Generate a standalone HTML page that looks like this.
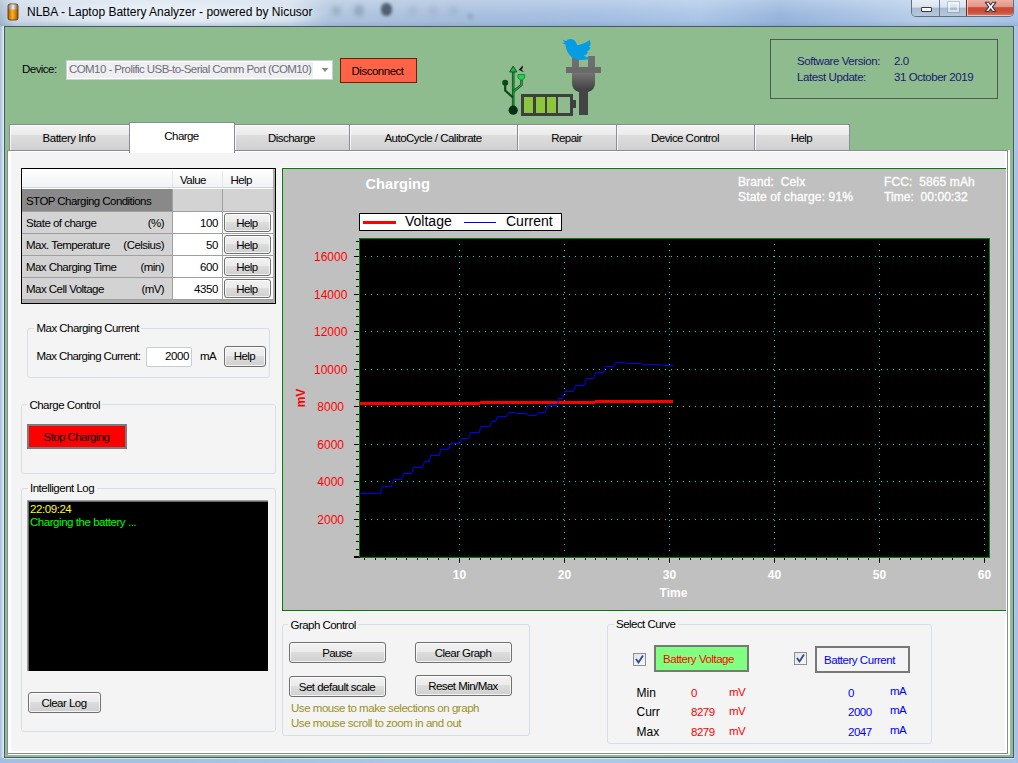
<!DOCTYPE html><html><head><meta charset="utf-8"><style>
html,body{margin:0;padding:0;}
body{width:1018px;height:763px;overflow:hidden;position:relative;font-family:"Liberation Sans", sans-serif;background:#a9c3e3;}
.t{position:absolute;white-space:nowrap;}
.b{position:absolute;}
svg{position:absolute;left:0;top:0;}
</style></head><body>
<div class="b" style="left:0px;top:0px;width:1018px;height:763px;background:linear-gradient(90deg,#a9bbd0 0%,#cfdbe9 1.5%,#d8e3ef 11.8%,#d3dfec 28.5%,#b0c5df 32.4%,#a8bfdd 44.2%,#a5c0e3 58.9%,#adc7e7 68.8%,#98b6dc 76.6%,#a9c3e4 84.5%,#b8cfe9 90.4%,#a8c4e8 100%);"></div>
<div class="b" style="left:0px;top:0px;width:1018px;height:26px;background:linear-gradient(180deg,rgba(255,255,255,0.25),rgba(255,255,255,0) 60%,rgba(80,110,150,0.06) 100%);"></div>
<div class="b" style="left:14px;top:1px;width:317px;height:24px;background:radial-gradient(ellipse 50% 60% at 50% 55%,rgba(236,243,250,0.85) 0%,rgba(236,243,250,0.55) 60%,rgba(236,243,250,0) 100%);"></div>
<div class="b" style="left:0px;top:21px;width:1018px;height:5px;background:linear-gradient(180deg,rgba(90,120,160,0) 0%,rgba(90,120,160,0.18) 100%);"></div>
<div class="b" style="left:332px;top:6px;width:9px;height:9px;background:rgba(80,110,100,0.25);filter:blur(2px);border-radius:50%;"></div>
<div class="b" style="left:354px;top:5px;width:10px;height:11px;background:rgba(60,80,100,0.25);filter:blur(2px);border-radius:40%;"></div>
<div class="b" style="left:381px;top:3px;width:11px;height:13px;background:rgba(40,50,65,0.7);filter:blur(1.6px);border-radius:45%;"></div>
<div class="b" style="left:408px;top:6px;width:9px;height:9px;background:rgba(90,110,140,0.12);filter:blur(2px);border-radius:50%;"></div>
<div class="b" style="left:429px;top:6px;width:9px;height:9px;background:rgba(90,110,140,0.12);filter:blur(2px);border-radius:50%;"></div>
<div class="b" style="left:449px;top:6px;width:9px;height:9px;background:rgba(90,110,140,0.12);filter:blur(2px);border-radius:50%;"></div>
<div class="b" style="left:467px;top:13px;width:7px;height:7px;background:rgba(70,90,120,0.18);filter:blur(1.5px);border-radius:50%;"></div>
<div class="b" style="left:0px;top:26px;width:4px;height:737px;background:linear-gradient(90deg,#a9bcd2,#c6d9ee 60%,#e6f0fa);"></div>
<div class="b" style="left:0px;top:758px;width:1018px;height:5px;background:linear-gradient(90deg,#a3bedf,#abc9ea 50%,#a6c4e8);"></div>
<div class="b" style="left:4px;top:758px;width:1010px;height:1px;background:#d8e6f5;"></div>
<div class="b" style="left:1014px;top:26px;width:4px;height:737px;background:linear-gradient(90deg,#b0c8e6,#a2bfe4);"></div>
<svg width="1018" height="30" style="left:0;top:0"><defs><linearGradient id="bat" x1="0" x2="1" y1="0" y2="0"><stop offset="0" stop-color="#b25a00"/><stop offset="0.45" stop-color="#ffb020"/><stop offset="1" stop-color="#a85000"/></linearGradient><linearGradient id="batt" x1="0" x2="1"><stop offset="0" stop-color="#777"/><stop offset="0.5" stop-color="#eee"/><stop offset="1" stop-color="#666"/></linearGradient></defs><rect x="8" y="4" width="10" height="16" rx="2" fill="url(#bat)" stroke="#4a3000" stroke-width="0.8"/><rect x="8.4" y="4.4" width="9.2" height="5" rx="1.5" fill="url(#batt)"/></svg>
<div class="t" style="left:27px;top:5px;font-size:12px;line-height:14px;color:#000;letter-spacing:0px;">NLBA - Laptop Battery Analyzer - powered by Nicusor</div>
<div class="b" style="left:911px;top:0px;width:103px;height:17px;box-sizing:border-box;border:1px solid #5f6f83;border-top:none;border-radius:0 0 5px 5px;overflow:hidden;"></div>
<div class="b" style="left:912px;top:0px;width:27px;height:16px;background:linear-gradient(#e7eef7 0%,#d9e4f0 45%,#a9bad0 50%,#b8c8dc 100%);border-radius:0 0 0 4px;"></div>
<div class="b" style="left:939px;top:0px;width:1px;height:16px;background:#6a7a8e;"></div>
<div class="b" style="left:940px;top:0px;width:26px;height:16px;background:linear-gradient(#e7eef7 0%,#d9e4f0 45%,#a9bad0 50%,#b8c8dc 100%);"></div>
<div class="b" style="left:966px;top:0px;width:1px;height:16px;background:#7a2a20;"></div>
<div class="b" style="left:967px;top:0px;width:46px;height:16px;background:linear-gradient(#eeb0a2 0%,#e0968a 42%,#cf4a32 48%,#c8503a 75%,#d87a66 100%);border-radius:0 0 4px 0;box-shadow:inset 1px -1px 0 rgba(255,220,210,0.7);"></div>
<div class="b" style="left:921px;top:7px;width:11px;height:5px;box-sizing:border-box;border:1px solid #333b47;background:#fff;border-radius:1px;"></div>
<div class="b" style="left:948px;top:2px;width:11px;height:10px;box-sizing:border-box;border:2px solid rgba(255,255,255,0.55);outline:1px solid rgba(120,135,155,0.4);"></div>
<svg width="1018" height="20" style="left:0;top:0"><path d="M985.3 2.3 L988.7 2.3 L990.6 5 L992.5 2.3 L995.9 2.3 L992.5 6.9 L995.9 11.5 L992.5 11.5 L990.6 8.8 L988.7 11.5 L985.3 11.5 L988.7 6.9 Z" fill="#fff" stroke="#343646" stroke-width="1.1" stroke-linejoin="round"/></svg>
<div class="b" style="left:4px;top:26px;width:1010px;height:732px;background:#4a5868;"></div>
<div class="b" style="left:5px;top:27px;width:1008px;height:730px;background:#8fbc8f;"></div>
<div class="t" style="left:22px;top:63px;font-size:11.5px;line-height:13px;color:#000;letter-spacing:-0.537px;">Device:</div>
<div class="b" style="left:66px;top:60px;width:267px;height:20px;box-sizing:border-box;border:1px solid #c9d0d6;background:#fff;"></div>
<div class="b" style="left:68px;top:62px;width:245px;height:16px;background:#efefef;"></div>
<div class="t" style="left:69px;top:63px;font-size:11.5px;line-height:13px;color:#6d6d80;letter-spacing:-0.572px;">COM10 - Prolific USB-to-Serial Comm Port (COM10)</div>
<svg width="1018" height="100" style="left:0;top:0"><path d="M321.5 68 L328.5 68 L325 72 Z" fill="#8a8a8a"/></svg>
<div class="b" style="left:340px;top:58px;width:77px;height:25px;box-sizing:border-box;border:1px solid #6e1d10;background:#ff6347;"></div>
<div class="t" style="left:351.5px;top:65px;font-size:11.5px;line-height:13px;color:#000;letter-spacing:-0.484px;">Disconnect</div>
<div class="b" style="left:770px;top:39px;width:228px;height:60px;box-sizing:border-box;border:1px solid #505a50;"></div>
<div class="t" style="left:797px;top:55px;font-size:11.5px;line-height:13px;color:#191970;letter-spacing:-0.424px;">Software Version:</div>
<div class="t" style="left:894px;top:55px;font-size:11.5px;line-height:13px;color:#191970;letter-spacing:-0.419px;">2.0</div>
<div class="t" style="left:797px;top:71px;font-size:11.5px;line-height:13px;color:#191970;letter-spacing:-0.422px;">Latest Update:</div>
<div class="t" style="left:894px;top:71px;font-size:11.5px;line-height:13px;color:#191970;letter-spacing:-0.438px;">31 October 2019</div>
<svg width="1018" height="130" style="left:0;top:0">
<defs>
<linearGradient id="plug" x1="0" y1="0" x2="0" y2="1"><stop offset="0" stop-color="#757575"/><stop offset="1" stop-color="#3a3a3a"/></linearGradient>
</defs>
<!-- plug -->
<rect x="572" y="56" width="7" height="12" fill="#6e6e6e"/>
<rect x="588" y="56" width="7" height="12" fill="#6e6e6e"/>
<rect x="566" y="67" width="35" height="6" fill="#6a6a6a"/>
<path d="M572 73 L595 73 L595 83 Q595 90 588 92 L579 92 Q572 90 572 83 Z" fill="url(#plug)"/>
<rect x="579" y="90" width="9" height="25" fill="#444"/>
<!-- twitter bird -->
<path d="M562.6 39.8 L566.3 41.2 C567 39.6 569 38.9 571 39 C574 39.2 576.2 41.5 577.2 45.3 C581 44.8 586 43 589.6 40.1 C590.8 41.5 590.7 44 590.2 45.6 L588.6 46.7 L590.6 47.6 C590 49 589.2 50.3 588.2 51 L586.4 51.4 L588 52.2 C587.3 53.6 586.2 54.7 585 55.2 L583.6 55.4 L586.3 57 C587.8 57.8 589.5 58.2 591 58.3 C588.5 59.6 585 60 581.5 60 C576 60 571 57.5 568.5 53.5 C566.7 50.8 565.6 47.5 565.5 44.6 L562.4 43 L564.6 42.4 Z" fill="#049de4"/>
<!-- battery -->
<rect x="522.5" y="95.5" width="49" height="19" fill="none" stroke="#3f3f3f" stroke-width="3"/>
<rect x="572" y="100" width="4" height="8" fill="#3f3f3f"/>
<rect x="524" y="97" width="9" height="16" fill="#8cc63e"/>
<rect x="536" y="97" width="9" height="16" fill="#8cc63e"/>
<rect x="547" y="97" width="9" height="16" fill="#8cc63e"/>
<rect x="558" y="97" width="11" height="16" fill="#8fbc8f"/>
<rect x="556" y="97" width="2" height="16" fill="#3f3f3f"/>
<rect x="533" y="97" width="3" height="16" fill="#3f3f3f"/>
<rect x="545" y="97" width="2" height="16" fill="#3f3f3f"/>
<!-- usb -->
<path d="M513.2 108 L513.2 71" stroke="#0d4a1a" stroke-width="2.6"/>
<path d="M513.2 108 L513.2 71" stroke="#1c9a3c" stroke-width="1.2"/>
<path d="M509.6 72 L513.2 66 L516.8 72 Z" fill="#22b04a" stroke="#0d4a1a" stroke-width="0.9"/>
<path d="M505.2 84 L505.2 90.5 L513 97.5" stroke="#0d4a1a" stroke-width="2.2" fill="none"/>
<path d="M521.5 79 L521.5 85 L513.4 91.5" stroke="#0d4a1a" stroke-width="2.4" fill="none"/>
<path d="M521.5 79 L521.5 85 L513.4 91.5" stroke="#20a844" stroke-width="1.1" fill="none"/>
<circle cx="505.2" cy="82.8" r="3" fill="#0a4a18"/>
<path d="M518 74.5 L524.6 74.5 L524.6 78 L522.5 80 L520.5 80 L518 78 Z" fill="#1fd048" stroke="#117a2c" stroke-width="0.8"/>
<circle cx="513.2" cy="110.2" r="4.6" fill="#06300f"/>
<path d="M518.5 70 C520 68.5 521 67.5 522.5 65.5 L523 67.5 L521.5 69.5 L524 72 L522 71.5 L520.5 70.5 Z" fill="#111"/>
</svg>
<div class="b" style="left:9px;top:124px;width:121px;height:27px;box-sizing:border-box;border:1px solid #898c95;border-bottom:none;background:linear-gradient(#f3f3f3 0%,#ececec 36%,#dddddd 40%,#cfcfcf 100%);box-shadow:inset 1px 1px 0 rgba(255,255,255,0.8);"></div>
<div class="t" style="left:-131.0px;width:400px;text-align:center;top:132px;font-size:11.5px;line-height:13px;color:#000;letter-spacing:-0.503px;">Battery Info</div>
<div class="b" style="left:234px;top:124px;width:116px;height:27px;box-sizing:border-box;border:1px solid #898c95;border-bottom:none;background:linear-gradient(#f3f3f3 0%,#ececec 36%,#dddddd 40%,#cfcfcf 100%);box-shadow:inset 1px 1px 0 rgba(255,255,255,0.8);"></div>
<div class="t" style="left:91.5px;width:400px;text-align:center;top:132px;font-size:11.5px;line-height:13px;color:#000;letter-spacing:-0.548px;">Discharge</div>
<div class="b" style="left:349px;top:124px;width:169px;height:27px;box-sizing:border-box;border:1px solid #898c95;border-bottom:none;background:linear-gradient(#f3f3f3 0%,#ececec 36%,#dddddd 40%,#cfcfcf 100%);box-shadow:inset 1px 1px 0 rgba(255,255,255,0.8);"></div>
<div class="t" style="left:233.0px;width:400px;text-align:center;top:132px;font-size:11.5px;line-height:13px;color:#000;letter-spacing:-0.519px;">AutoCycle / Calibrate</div>
<div class="b" style="left:517px;top:124px;width:100px;height:27px;box-sizing:border-box;border:1px solid #898c95;border-bottom:none;background:linear-gradient(#f3f3f3 0%,#ececec 36%,#dddddd 40%,#cfcfcf 100%);box-shadow:inset 1px 1px 0 rgba(255,255,255,0.8);"></div>
<div class="t" style="left:366.5px;width:400px;text-align:center;top:132px;font-size:11.5px;line-height:13px;color:#000;letter-spacing:-0.545px;">Repair</div>
<div class="b" style="left:616px;top:124px;width:139px;height:27px;box-sizing:border-box;border:1px solid #898c95;border-bottom:none;background:linear-gradient(#f3f3f3 0%,#ececec 36%,#dddddd 40%,#cfcfcf 100%);box-shadow:inset 1px 1px 0 rgba(255,255,255,0.8);"></div>
<div class="t" style="left:485.0px;width:400px;text-align:center;top:132px;font-size:11.5px;line-height:13px;color:#000;letter-spacing:-0.532px;">Device Control</div>
<div class="b" style="left:754px;top:124px;width:96px;height:27px;box-sizing:border-box;border:1px solid #898c95;border-bottom:none;background:linear-gradient(#f3f3f3 0%,#ececec 36%,#dddddd 40%,#cfcfcf 100%);box-shadow:inset 1px 1px 0 rgba(255,255,255,0.8);"></div>
<div class="t" style="left:601.5px;width:400px;text-align:center;top:132px;font-size:11.5px;line-height:13px;color:#000;letter-spacing:-0.558px;">Help</div>
<div class="b" style="left:7px;top:150px;width:1001px;height:604px;box-sizing:border-box;border:1px solid #898c95;background:#fff;"></div>
<div class="b" style="left:1008px;top:150px;width:2px;height:605px;background:#fff;"></div>
<div class="b" style="left:8px;top:754px;width:1002px;height:1px;background:#fff;"></div>
<div class="b" style="left:11px;top:152px;width:994px;height:599px;background:#f4f4f4;"></div>
<div class="b" style="left:129px;top:122px;width:106px;height:31px;box-sizing:border-box;border:1px solid #898c95;border-bottom:none;background:#fff;"></div>
<div class="t" style="left:-18.5px;width:400px;text-align:center;top:130px;font-size:11.5px;line-height:13px;color:#000;letter-spacing:-0.568px;">Charge</div>
<div class="b" style="left:21px;top:168px;width:255px;height:136px;background:#000;"></div>
<div class="b" style="left:22px;top:169px;width:253px;height:134px;background:#ababab;"></div>
<div class="b" style="left:22px;top:169px;width:251px;height:20px;background:#fff;"></div>
<div class="b" style="left:23px;top:171px;width:250px;height:17px;background:linear-gradient(#ffffff 0%,#f7f8fa 40%,#eff1f4 100%);"></div>
<div class="b" style="left:22px;top:187px;width:251px;height:1px;background:#d5d5d5;"></div>
<div class="b" style="left:172px;top:171px;width:1px;height:16px;background:#e4e6ea;"></div>
<div class="b" style="left:222px;top:171px;width:1px;height:16px;background:#e4e6ea;"></div>
<div class="t" style="left:180px;top:174px;font-size:11.5px;line-height:13px;color:#000;letter-spacing:-0.541px;">Value</div>
<div class="t" style="left:230.5px;top:174px;font-size:11.5px;line-height:13px;color:#000;letter-spacing:-0.558px;">Help</div>
<div class="b" style="left:22px;top:189px;width:251px;height:23px;background:#a0a0a0;"></div>
<div class="b" style="left:22px;top:189px;width:150px;height:22px;background:#898989;"></div>
<div class="b" style="left:173px;top:189px;width:49px;height:22px;background:#d3d3d3;"></div>
<div class="b" style="left:223px;top:189px;width:50px;height:22px;background:#d3d3d3;"></div>
<div class="t" style="left:26px;top:195px;font-size:11.5px;line-height:13px;color:#000;letter-spacing:-0.547px;">STOP Charging Conditions</div>
<div class="b" style="left:22px;top:212px;width:251px;height:22px;background:#a0a0a0;"></div>
<div class="b" style="left:22px;top:212px;width:150px;height:21px;background:#d3d3d3;"></div>
<div class="b" style="left:173px;top:212px;width:49px;height:21px;background:#fff;"></div>
<div class="b" style="left:223px;top:212px;width:50px;height:21px;background:#fff;"></div>
<div class="t" style="left:26px;top:217px;font-size:11.5px;line-height:13px;color:#000;letter-spacing:-0.516px;">State of charge</div>
<div class="t" style="right:854px;top:217px;font-size:11.5px;line-height:13px;color:#000;letter-spacing:-0.56px;">(%)</div>
<div class="t" style="right:800px;top:217px;font-size:11.5px;line-height:13px;color:#000;letter-spacing:-0.366px;">100</div>
<div class="b" style="left:224px;top:213px;width:47px;height:19px;box-sizing:border-box;border:1px solid #707070;border-radius:3px;background:linear-gradient(#f2f2f2 0%,#ebebeb 45%,#dddddd 50%,#cfcfcf 100%);box-shadow:inset 0 0 0 1px rgba(255,255,255,0.75);"></div>
<div class="t" style="left:47.0px;width:400px;text-align:center;top:217px;font-size:11.5px;line-height:13px;color:#000;letter-spacing:-0.558px;">Help</div>
<div class="b" style="left:22px;top:234px;width:251px;height:22px;background:#a0a0a0;"></div>
<div class="b" style="left:22px;top:234px;width:150px;height:21px;background:#d3d3d3;"></div>
<div class="b" style="left:173px;top:234px;width:49px;height:21px;background:#fff;"></div>
<div class="b" style="left:223px;top:234px;width:50px;height:21px;background:#fff;"></div>
<div class="t" style="left:26px;top:239px;font-size:11.5px;line-height:13px;color:#000;letter-spacing:-0.545px;">Max. Temperature</div>
<div class="t" style="right:854px;top:239px;font-size:11.5px;line-height:13px;color:#000;letter-spacing:-0.522px;">(Celsius)</div>
<div class="t" style="right:800px;top:239px;font-size:11.5px;line-height:13px;color:#000;letter-spacing:-0.366px;">50</div>
<div class="b" style="left:224px;top:235px;width:47px;height:19px;box-sizing:border-box;border:1px solid #707070;border-radius:3px;background:linear-gradient(#f2f2f2 0%,#ebebeb 45%,#dddddd 50%,#cfcfcf 100%);box-shadow:inset 0 0 0 1px rgba(255,255,255,0.75);"></div>
<div class="t" style="left:47.0px;width:400px;text-align:center;top:239px;font-size:11.5px;line-height:13px;color:#000;letter-spacing:-0.558px;">Help</div>
<div class="b" style="left:22px;top:256px;width:251px;height:22px;background:#a0a0a0;"></div>
<div class="b" style="left:22px;top:256px;width:150px;height:21px;background:#d3d3d3;"></div>
<div class="b" style="left:173px;top:256px;width:49px;height:21px;background:#fff;"></div>
<div class="b" style="left:223px;top:256px;width:50px;height:21px;background:#fff;"></div>
<div class="t" style="left:26px;top:261px;font-size:11.5px;line-height:13px;color:#000;letter-spacing:-0.553px;">Max Charging Time</div>
<div class="t" style="right:854px;top:261px;font-size:11.5px;line-height:13px;color:#000;letter-spacing:-0.531px;">(min)</div>
<div class="t" style="right:800px;top:261px;font-size:11.5px;line-height:13px;color:#000;letter-spacing:-0.366px;">600</div>
<div class="b" style="left:224px;top:257px;width:47px;height:19px;box-sizing:border-box;border:1px solid #707070;border-radius:3px;background:linear-gradient(#f2f2f2 0%,#ebebeb 45%,#dddddd 50%,#cfcfcf 100%);box-shadow:inset 0 0 0 1px rgba(255,255,255,0.75);"></div>
<div class="t" style="left:47.0px;width:400px;text-align:center;top:261px;font-size:11.5px;line-height:13px;color:#000;letter-spacing:-0.558px;">Help</div>
<div class="b" style="left:22px;top:278px;width:251px;height:22px;background:#a0a0a0;"></div>
<div class="b" style="left:22px;top:278px;width:150px;height:21px;background:#d3d3d3;"></div>
<div class="b" style="left:173px;top:278px;width:49px;height:21px;background:#fff;"></div>
<div class="b" style="left:223px;top:278px;width:50px;height:21px;background:#fff;"></div>
<div class="t" style="left:26px;top:283px;font-size:11.5px;line-height:13px;color:#000;letter-spacing:-0.53px;">Max Cell Voltage</div>
<div class="t" style="right:854px;top:283px;font-size:11.5px;line-height:13px;color:#000;letter-spacing:-0.573px;">(mV)</div>
<div class="t" style="right:800px;top:283px;font-size:11.5px;line-height:13px;color:#000;letter-spacing:-0.366px;">4350</div>
<div class="b" style="left:224px;top:279px;width:47px;height:19px;box-sizing:border-box;border:1px solid #707070;border-radius:3px;background:linear-gradient(#f2f2f2 0%,#ebebeb 45%,#dddddd 50%,#cfcfcf 100%);box-shadow:inset 0 0 0 1px rgba(255,255,255,0.75);"></div>
<div class="t" style="left:47.0px;width:400px;text-align:center;top:283px;font-size:11.5px;line-height:13px;color:#000;letter-spacing:-0.558px;">Help</div>
<div class="b" style="left:27px;top:328px;width:243px;height:50px;box-sizing:border-box;border:1px solid #d5dfe5;border-radius:3px;"></div>
<div class="b" style="left:34px;top:327px;width:107px;height:4px;background:#f4f4f4;"></div>
<div class="t" style="left:36.5px;top:322px;font-size:11.5px;line-height:13px;color:#000;letter-spacing:-0.541px;">Max Charging Current</div>
<div class="t" style="left:36.5px;top:350px;font-size:11.5px;line-height:13px;color:#000;letter-spacing:-0.596px;">Max Charging Current:</div>
<div class="b" style="left:146px;top:347px;width:46px;height:20px;box-sizing:border-box;border:1px solid #c5cdd5;background:#fff;border-radius:2px;"></div>
<div class="t" style="right:829px;top:350px;font-size:11.5px;line-height:13px;color:#000;letter-spacing:-0.366px;">2000</div>
<div class="t" style="left:200px;top:350px;font-size:11.5px;line-height:13px;color:#000;letter-spacing:-0.675px;">mA</div>
<div class="b" style="left:224px;top:346px;width:42px;height:21px;box-sizing:border-box;border:1px solid #707070;border-radius:3px;background:linear-gradient(#f2f2f2 0%,#ebebeb 45%,#dddddd 50%,#cfcfcf 100%);box-shadow:inset 0 0 0 1px rgba(255,255,255,0.75);"></div>
<div class="t" style="left:44.5px;width:400px;text-align:center;top:350px;font-size:11.5px;line-height:13px;color:#000;letter-spacing:-0.558px;">Help</div>
<div class="b" style="left:21px;top:404px;width:255px;height:70px;box-sizing:border-box;border:1px solid #d5dfe5;border-radius:3px;"></div>
<div class="b" style="left:27px;top:403px;width:75px;height:4px;background:#f4f4f4;"></div>
<div class="t" style="left:29.5px;top:399px;font-size:11.5px;line-height:13px;color:#000;letter-spacing:-0.538px;">Charge Control</div>
<div class="b" style="left:27px;top:424px;width:100px;height:25px;box-sizing:border-box;border:2px solid #7b7b7b;background:#ff0000;"></div>
<div class="t" style="left:-123.5px;width:400px;text-align:center;top:431px;font-size:11.5px;line-height:13px;color:#000;letter-spacing:-0.589px;">Stop Charging</div>
<div class="b" style="left:21px;top:488px;width:255px;height:244px;box-sizing:border-box;border:1px solid #d5dfe5;border-radius:3px;"></div>
<div class="b" style="left:28px;top:487px;width:69px;height:4px;background:#f4f4f4;"></div>
<div class="t" style="left:30px;top:482px;font-size:11.5px;line-height:13px;color:#000;letter-spacing:-0.5px;">Intelligent Log</div>
<div class="b" style="left:27px;top:500px;width:241px;height:171px;background:#000;border-top:1px solid #a0a0a0;border-left:1px solid #a0a0a0;box-sizing:border-box;box-shadow:inset 1px 1px 0 #696969;"></div>
<div class="t" style="left:30px;top:503px;font-size:11.5px;line-height:13px;color:#ffff00;letter-spacing:-0.43px;">22:09:24</div>
<div class="t" style="left:30px;top:516px;font-size:11.5px;line-height:13px;color:#00ff00;letter-spacing:-0.453px;">Charging the battery ...</div>
<div class="b" style="left:28px;top:692px;width:73px;height:21px;box-sizing:border-box;border:1px solid #707070;border-radius:3px;background:linear-gradient(#f2f2f2 0%,#ebebeb 45%,#dddddd 50%,#cfcfcf 100%);box-shadow:inset 0 0 0 1px rgba(255,255,255,0.75);"></div>
<div class="t" style="left:-136.0px;width:400px;text-align:center;top:697px;font-size:11.5px;line-height:13px;color:#000;letter-spacing:-0.536px;">Clear Log</div>
<div class="b" style="left:282px;top:624px;width:248px;height:112px;box-sizing:border-box;border:1px solid #d5dfe5;border-radius:3px;"></div>
<div class="b" style="left:288px;top:623px;width:70px;height:4px;background:#f4f4f4;"></div>
<div class="t" style="left:290.5px;top:619px;font-size:11.5px;line-height:13px;color:#000;letter-spacing:-0.536px;">Graph Control</div>
<div class="b" style="left:289px;top:642px;width:97px;height:21px;box-sizing:border-box;border:1px solid #707070;border-radius:3px;background:linear-gradient(#f2f2f2 0%,#ebebeb 45%,#dddddd 50%,#cfcfcf 100%);box-shadow:inset 0 0 0 1px rgba(255,255,255,0.75);"></div>
<div class="t" style="left:137.0px;width:400px;text-align:center;top:647px;font-size:11.5px;line-height:13px;color:#000;letter-spacing:-0.575px;">Pause</div>
<div class="b" style="left:415px;top:642px;width:97px;height:21px;box-sizing:border-box;border:1px solid #707070;border-radius:3px;background:linear-gradient(#f2f2f2 0%,#ebebeb 45%,#dddddd 50%,#cfcfcf 100%);box-shadow:inset 0 0 0 1px rgba(255,255,255,0.75);"></div>
<div class="t" style="left:263.0px;width:400px;text-align:center;top:647px;font-size:11.5px;line-height:13px;color:#000;letter-spacing:-0.543px;">Clear Graph</div>
<div class="b" style="left:289px;top:676px;width:97px;height:21px;box-sizing:border-box;border:1px solid #707070;border-radius:3px;background:linear-gradient(#f2f2f2 0%,#ebebeb 45%,#dddddd 50%,#cfcfcf 100%);box-shadow:inset 0 0 0 1px rgba(255,255,255,0.75);"></div>
<div class="t" style="left:137.0px;width:400px;text-align:center;top:681px;font-size:11.5px;line-height:13px;color:#000;letter-spacing:-0.51px;">Set default scale</div>
<div class="b" style="left:415px;top:675px;width:97px;height:21px;box-sizing:border-box;border:1px solid #707070;border-radius:3px;background:linear-gradient(#f2f2f2 0%,#ebebeb 45%,#dddddd 50%,#cfcfcf 100%);box-shadow:inset 0 0 0 1px rgba(255,255,255,0.75);"></div>
<div class="t" style="left:263.0px;width:400px;text-align:center;top:680px;font-size:11.5px;line-height:13px;color:#000;letter-spacing:-0.552px;">Reset Min/Max</div>
<div class="t" style="left:291px;top:702px;font-size:11.5px;line-height:13px;color:#9a901c;letter-spacing:-0.464px;">Use mouse to make selections on graph</div>
<div class="t" style="left:291px;top:717px;font-size:11.5px;line-height:13px;color:#9a901c;letter-spacing:-0.455px;">Use mouse scroll to zoom in and out</div>
<div class="b" style="left:607px;top:624px;width:325px;height:120px;box-sizing:border-box;border:1px solid #d5dfe5;border-radius:3px;"></div>
<div class="b" style="left:614px;top:623px;width:64px;height:4px;background:#f4f4f4;"></div>
<div class="t" style="left:616px;top:618px;font-size:11.5px;line-height:13px;color:#000;letter-spacing:-0.534px;">Select Curve</div>
<div class="b" style="left:633px;top:653px;width:13px;height:13px;box-sizing:border-box;border:1px solid #8f8f8f;background:linear-gradient(135deg,#dfe3ea,#f7f8fa);"></div>
<svg width="1018" height="763" style="left:0;top:0"><path d="M636 659 L638.5 662.5 L643 655.5" stroke="#2b4a8a" stroke-width="1.8" fill="none"/></svg>
<div class="b" style="left:654px;top:645px;width:95px;height:27px;box-sizing:border-box;border:2px solid #787878;background:#80ff80;"></div>
<div class="t" style="left:663px;top:653px;font-size:11.5px;line-height:13px;color:#ff0000;letter-spacing:-0.468px;">Battery Voltage</div>
<div class="b" style="left:794px;top:652px;width:13px;height:13px;box-sizing:border-box;border:1px solid #8f8f8f;background:linear-gradient(135deg,#dfe3ea,#f7f8fa);"></div>
<svg width="1018" height="763" style="left:0;top:0"><path d="M797 658 L799.5 661.5 L804 654.5" stroke="#2b4a8a" stroke-width="1.8" fill="none"/></svg>
<div class="b" style="left:815px;top:646px;width:95px;height:27px;box-sizing:border-box;border:2px solid #787878;background:#f4f4f4;"></div>
<div class="t" style="left:824px;top:654px;font-size:11.5px;line-height:13px;color:#0000ff;letter-spacing:-0.47px;">Battery Current</div>
<div class="t" style="left:636.5px;top:686px;font-size:12px;line-height:14px;color:#000;letter-spacing:0px;">Min</div>
<div class="t" style="left:691px;top:687px;font-size:11.5px;line-height:13px;color:#ff0000;letter-spacing:-0.466px;">0</div>
<div class="t" style="left:729px;top:686px;font-size:11.5px;line-height:13px;color:#ff0000;letter-spacing:-0.575px;">mV</div>
<div class="t" style="left:848px;top:687px;font-size:11.5px;line-height:13px;color:#0000ff;letter-spacing:-0.466px;">0</div>
<div class="t" style="left:890px;top:685px;font-size:11.5px;line-height:13px;color:#0000ff;letter-spacing:-0.575px;">mA</div>
<div class="t" style="left:636.5px;top:705px;font-size:12px;line-height:14px;color:#000;letter-spacing:0px;">Curr</div>
<div class="t" style="left:691px;top:706px;font-size:11.5px;line-height:13px;color:#ff0000;letter-spacing:-0.466px;">8279</div>
<div class="t" style="left:729px;top:705px;font-size:11.5px;line-height:13px;color:#ff0000;letter-spacing:-0.575px;">mV</div>
<div class="t" style="left:848px;top:706px;font-size:11.5px;line-height:13px;color:#0000ff;letter-spacing:-0.466px;">2000</div>
<div class="t" style="left:890px;top:704px;font-size:11.5px;line-height:13px;color:#0000ff;letter-spacing:-0.575px;">mA</div>
<div class="t" style="left:636.5px;top:725px;font-size:12px;line-height:14px;color:#000;letter-spacing:0px;">Max</div>
<div class="t" style="left:691px;top:726px;font-size:11.5px;line-height:13px;color:#ff0000;letter-spacing:-0.466px;">8279</div>
<div class="t" style="left:729px;top:725px;font-size:11.5px;line-height:13px;color:#ff0000;letter-spacing:-0.575px;">mV</div>
<div class="t" style="left:848px;top:726px;font-size:11.5px;line-height:13px;color:#0000ff;letter-spacing:-0.466px;">2047</div>
<div class="t" style="left:890px;top:724px;font-size:11.5px;line-height:13px;color:#0000ff;letter-spacing:-0.575px;">mA</div>
<div class="b" style="left:281px;top:167px;width:725px;height:445px;background:#fff;"></div>
<div class="b" style="left:282px;top:168px;width:724px;height:443px;box-sizing:border-box;border:1px solid #008000;border-right:none;background:#c0c0c0;"></div>
<div class="t" style="left:365.5px;top:176px;font-size:14.7px;line-height:16px;color:#ffffff;font-weight:bold;letter-spacing:0px;line-height:17px;top:176px;">Charging</div>
<div class="t" style="left:738px;top:175px;font-size:12px;line-height:14px;color:#fbfbfb;letter-spacing:0.1px;-webkit-text-stroke:0.35px #fff;">Brand:&nbsp; Celx</div>
<div class="t" style="left:738px;top:190px;font-size:12px;line-height:14px;color:#fbfbfb;letter-spacing:0.15px;-webkit-text-stroke:0.35px #fff;">State of charge: 91%</div>
<div class="t" style="left:884px;top:175px;font-size:12px;line-height:14px;color:#fbfbfb;letter-spacing:0.1px;-webkit-text-stroke:0.35px #fff;">FCC:&nbsp; 5865 mAh</div>
<div class="t" style="left:884px;top:190px;font-size:12px;line-height:14px;color:#fbfbfb;letter-spacing:0.05px;-webkit-text-stroke:0.35px #fff;">Time:&nbsp; 00:00:32</div>
<div class="b" style="left:359px;top:213px;width:203px;height:18px;box-sizing:border-box;border:1px solid #000;background:#fff;"></div>
<div class="b" style="left:363px;top:221px;width:33px;height:3px;background:#ff0000;"></div>
<div class="t" style="left:405px;top:213px;font-size:14px;line-height:16px;color:#000;letter-spacing:0px;">Voltage</div>
<div class="b" style="left:464px;top:222px;width:32px;height:1px;background:#0000ff;"></div>
<div class="t" style="left:506px;top:213px;font-size:14px;line-height:16px;color:#000;letter-spacing:0px;">Current</div>
<svg width="1018" height="763" style="left:0;top:0" shape-rendering="crispEdges"><rect x="359" y="238" width="631" height="320" fill="#008000"/><rect x="360" y="239" width="629" height="318" fill="#000"/><path d="M365 519h1v1h-1zM371 519h1v1h-1zM377 519h1v1h-1zM383 519h1v1h-1zM389 519h1v1h-1zM395 519h1v1h-1zM401 519h1v1h-1zM407 519h1v1h-1zM413 519h1v1h-1zM419 519h1v1h-1zM425 519h1v1h-1zM431 519h1v1h-1zM437 519h1v1h-1zM443 519h1v1h-1zM449 519h1v1h-1zM455 519h1v1h-1zM461 519h1v1h-1zM467 519h1v1h-1zM473 519h1v1h-1zM479 519h1v1h-1zM485 519h1v1h-1zM491 519h1v1h-1zM497 519h1v1h-1zM503 519h1v1h-1zM509 519h1v1h-1zM515 519h1v1h-1zM521 519h1v1h-1zM527 519h1v1h-1zM533 519h1v1h-1zM539 519h1v1h-1zM545 519h1v1h-1zM551 519h1v1h-1zM557 519h1v1h-1zM563 519h1v1h-1zM569 519h1v1h-1zM575 519h1v1h-1zM581 519h1v1h-1zM587 519h1v1h-1zM593 519h1v1h-1zM599 519h1v1h-1zM605 519h1v1h-1zM611 519h1v1h-1zM617 519h1v1h-1zM623 519h1v1h-1zM629 519h1v1h-1zM635 519h1v1h-1zM641 519h1v1h-1zM647 519h1v1h-1zM653 519h1v1h-1zM659 519h1v1h-1zM665 519h1v1h-1zM671 519h1v1h-1zM677 519h1v1h-1zM683 519h1v1h-1zM689 519h1v1h-1zM695 519h1v1h-1zM701 519h1v1h-1zM707 519h1v1h-1zM713 519h1v1h-1zM719 519h1v1h-1zM725 519h1v1h-1zM731 519h1v1h-1zM737 519h1v1h-1zM743 519h1v1h-1zM749 519h1v1h-1zM755 519h1v1h-1zM761 519h1v1h-1zM767 519h1v1h-1zM773 519h1v1h-1zM779 519h1v1h-1zM785 519h1v1h-1zM791 519h1v1h-1zM797 519h1v1h-1zM803 519h1v1h-1zM809 519h1v1h-1zM815 519h1v1h-1zM821 519h1v1h-1zM827 519h1v1h-1zM833 519h1v1h-1zM839 519h1v1h-1zM845 519h1v1h-1zM851 519h1v1h-1zM857 519h1v1h-1zM863 519h1v1h-1zM869 519h1v1h-1zM875 519h1v1h-1zM881 519h1v1h-1zM887 519h1v1h-1zM893 519h1v1h-1zM899 519h1v1h-1zM905 519h1v1h-1zM911 519h1v1h-1zM917 519h1v1h-1zM923 519h1v1h-1zM929 519h1v1h-1zM935 519h1v1h-1zM941 519h1v1h-1zM947 519h1v1h-1zM953 519h1v1h-1zM959 519h1v1h-1zM965 519h1v1h-1zM971 519h1v1h-1zM977 519h1v1h-1zM983 519h1v1h-1zM365 481h1v1h-1zM371 481h1v1h-1zM377 481h1v1h-1zM383 481h1v1h-1zM389 481h1v1h-1zM395 481h1v1h-1zM401 481h1v1h-1zM407 481h1v1h-1zM413 481h1v1h-1zM419 481h1v1h-1zM425 481h1v1h-1zM431 481h1v1h-1zM437 481h1v1h-1zM443 481h1v1h-1zM449 481h1v1h-1zM455 481h1v1h-1zM461 481h1v1h-1zM467 481h1v1h-1zM473 481h1v1h-1zM479 481h1v1h-1zM485 481h1v1h-1zM491 481h1v1h-1zM497 481h1v1h-1zM503 481h1v1h-1zM509 481h1v1h-1zM515 481h1v1h-1zM521 481h1v1h-1zM527 481h1v1h-1zM533 481h1v1h-1zM539 481h1v1h-1zM545 481h1v1h-1zM551 481h1v1h-1zM557 481h1v1h-1zM563 481h1v1h-1zM569 481h1v1h-1zM575 481h1v1h-1zM581 481h1v1h-1zM587 481h1v1h-1zM593 481h1v1h-1zM599 481h1v1h-1zM605 481h1v1h-1zM611 481h1v1h-1zM617 481h1v1h-1zM623 481h1v1h-1zM629 481h1v1h-1zM635 481h1v1h-1zM641 481h1v1h-1zM647 481h1v1h-1zM653 481h1v1h-1zM659 481h1v1h-1zM665 481h1v1h-1zM671 481h1v1h-1zM677 481h1v1h-1zM683 481h1v1h-1zM689 481h1v1h-1zM695 481h1v1h-1zM701 481h1v1h-1zM707 481h1v1h-1zM713 481h1v1h-1zM719 481h1v1h-1zM725 481h1v1h-1zM731 481h1v1h-1zM737 481h1v1h-1zM743 481h1v1h-1zM749 481h1v1h-1zM755 481h1v1h-1zM761 481h1v1h-1zM767 481h1v1h-1zM773 481h1v1h-1zM779 481h1v1h-1zM785 481h1v1h-1zM791 481h1v1h-1zM797 481h1v1h-1zM803 481h1v1h-1zM809 481h1v1h-1zM815 481h1v1h-1zM821 481h1v1h-1zM827 481h1v1h-1zM833 481h1v1h-1zM839 481h1v1h-1zM845 481h1v1h-1zM851 481h1v1h-1zM857 481h1v1h-1zM863 481h1v1h-1zM869 481h1v1h-1zM875 481h1v1h-1zM881 481h1v1h-1zM887 481h1v1h-1zM893 481h1v1h-1zM899 481h1v1h-1zM905 481h1v1h-1zM911 481h1v1h-1zM917 481h1v1h-1zM923 481h1v1h-1zM929 481h1v1h-1zM935 481h1v1h-1zM941 481h1v1h-1zM947 481h1v1h-1zM953 481h1v1h-1zM959 481h1v1h-1zM965 481h1v1h-1zM971 481h1v1h-1zM977 481h1v1h-1zM983 481h1v1h-1zM365 444h1v1h-1zM371 444h1v1h-1zM377 444h1v1h-1zM383 444h1v1h-1zM389 444h1v1h-1zM395 444h1v1h-1zM401 444h1v1h-1zM407 444h1v1h-1zM413 444h1v1h-1zM419 444h1v1h-1zM425 444h1v1h-1zM431 444h1v1h-1zM437 444h1v1h-1zM443 444h1v1h-1zM449 444h1v1h-1zM455 444h1v1h-1zM461 444h1v1h-1zM467 444h1v1h-1zM473 444h1v1h-1zM479 444h1v1h-1zM485 444h1v1h-1zM491 444h1v1h-1zM497 444h1v1h-1zM503 444h1v1h-1zM509 444h1v1h-1zM515 444h1v1h-1zM521 444h1v1h-1zM527 444h1v1h-1zM533 444h1v1h-1zM539 444h1v1h-1zM545 444h1v1h-1zM551 444h1v1h-1zM557 444h1v1h-1zM563 444h1v1h-1zM569 444h1v1h-1zM575 444h1v1h-1zM581 444h1v1h-1zM587 444h1v1h-1zM593 444h1v1h-1zM599 444h1v1h-1zM605 444h1v1h-1zM611 444h1v1h-1zM617 444h1v1h-1zM623 444h1v1h-1zM629 444h1v1h-1zM635 444h1v1h-1zM641 444h1v1h-1zM647 444h1v1h-1zM653 444h1v1h-1zM659 444h1v1h-1zM665 444h1v1h-1zM671 444h1v1h-1zM677 444h1v1h-1zM683 444h1v1h-1zM689 444h1v1h-1zM695 444h1v1h-1zM701 444h1v1h-1zM707 444h1v1h-1zM713 444h1v1h-1zM719 444h1v1h-1zM725 444h1v1h-1zM731 444h1v1h-1zM737 444h1v1h-1zM743 444h1v1h-1zM749 444h1v1h-1zM755 444h1v1h-1zM761 444h1v1h-1zM767 444h1v1h-1zM773 444h1v1h-1zM779 444h1v1h-1zM785 444h1v1h-1zM791 444h1v1h-1zM797 444h1v1h-1zM803 444h1v1h-1zM809 444h1v1h-1zM815 444h1v1h-1zM821 444h1v1h-1zM827 444h1v1h-1zM833 444h1v1h-1zM839 444h1v1h-1zM845 444h1v1h-1zM851 444h1v1h-1zM857 444h1v1h-1zM863 444h1v1h-1zM869 444h1v1h-1zM875 444h1v1h-1zM881 444h1v1h-1zM887 444h1v1h-1zM893 444h1v1h-1zM899 444h1v1h-1zM905 444h1v1h-1zM911 444h1v1h-1zM917 444h1v1h-1zM923 444h1v1h-1zM929 444h1v1h-1zM935 444h1v1h-1zM941 444h1v1h-1zM947 444h1v1h-1zM953 444h1v1h-1zM959 444h1v1h-1zM965 444h1v1h-1zM971 444h1v1h-1zM977 444h1v1h-1zM983 444h1v1h-1zM365 406h1v1h-1zM371 406h1v1h-1zM377 406h1v1h-1zM383 406h1v1h-1zM389 406h1v1h-1zM395 406h1v1h-1zM401 406h1v1h-1zM407 406h1v1h-1zM413 406h1v1h-1zM419 406h1v1h-1zM425 406h1v1h-1zM431 406h1v1h-1zM437 406h1v1h-1zM443 406h1v1h-1zM449 406h1v1h-1zM455 406h1v1h-1zM461 406h1v1h-1zM467 406h1v1h-1zM473 406h1v1h-1zM479 406h1v1h-1zM485 406h1v1h-1zM491 406h1v1h-1zM497 406h1v1h-1zM503 406h1v1h-1zM509 406h1v1h-1zM515 406h1v1h-1zM521 406h1v1h-1zM527 406h1v1h-1zM533 406h1v1h-1zM539 406h1v1h-1zM545 406h1v1h-1zM551 406h1v1h-1zM557 406h1v1h-1zM563 406h1v1h-1zM569 406h1v1h-1zM575 406h1v1h-1zM581 406h1v1h-1zM587 406h1v1h-1zM593 406h1v1h-1zM599 406h1v1h-1zM605 406h1v1h-1zM611 406h1v1h-1zM617 406h1v1h-1zM623 406h1v1h-1zM629 406h1v1h-1zM635 406h1v1h-1zM641 406h1v1h-1zM647 406h1v1h-1zM653 406h1v1h-1zM659 406h1v1h-1zM665 406h1v1h-1zM671 406h1v1h-1zM677 406h1v1h-1zM683 406h1v1h-1zM689 406h1v1h-1zM695 406h1v1h-1zM701 406h1v1h-1zM707 406h1v1h-1zM713 406h1v1h-1zM719 406h1v1h-1zM725 406h1v1h-1zM731 406h1v1h-1zM737 406h1v1h-1zM743 406h1v1h-1zM749 406h1v1h-1zM755 406h1v1h-1zM761 406h1v1h-1zM767 406h1v1h-1zM773 406h1v1h-1zM779 406h1v1h-1zM785 406h1v1h-1zM791 406h1v1h-1zM797 406h1v1h-1zM803 406h1v1h-1zM809 406h1v1h-1zM815 406h1v1h-1zM821 406h1v1h-1zM827 406h1v1h-1zM833 406h1v1h-1zM839 406h1v1h-1zM845 406h1v1h-1zM851 406h1v1h-1zM857 406h1v1h-1zM863 406h1v1h-1zM869 406h1v1h-1zM875 406h1v1h-1zM881 406h1v1h-1zM887 406h1v1h-1zM893 406h1v1h-1zM899 406h1v1h-1zM905 406h1v1h-1zM911 406h1v1h-1zM917 406h1v1h-1zM923 406h1v1h-1zM929 406h1v1h-1zM935 406h1v1h-1zM941 406h1v1h-1zM947 406h1v1h-1zM953 406h1v1h-1zM959 406h1v1h-1zM965 406h1v1h-1zM971 406h1v1h-1zM977 406h1v1h-1zM983 406h1v1h-1zM365 369h1v1h-1zM371 369h1v1h-1zM377 369h1v1h-1zM383 369h1v1h-1zM389 369h1v1h-1zM395 369h1v1h-1zM401 369h1v1h-1zM407 369h1v1h-1zM413 369h1v1h-1zM419 369h1v1h-1zM425 369h1v1h-1zM431 369h1v1h-1zM437 369h1v1h-1zM443 369h1v1h-1zM449 369h1v1h-1zM455 369h1v1h-1zM461 369h1v1h-1zM467 369h1v1h-1zM473 369h1v1h-1zM479 369h1v1h-1zM485 369h1v1h-1zM491 369h1v1h-1zM497 369h1v1h-1zM503 369h1v1h-1zM509 369h1v1h-1zM515 369h1v1h-1zM521 369h1v1h-1zM527 369h1v1h-1zM533 369h1v1h-1zM539 369h1v1h-1zM545 369h1v1h-1zM551 369h1v1h-1zM557 369h1v1h-1zM563 369h1v1h-1zM569 369h1v1h-1zM575 369h1v1h-1zM581 369h1v1h-1zM587 369h1v1h-1zM593 369h1v1h-1zM599 369h1v1h-1zM605 369h1v1h-1zM611 369h1v1h-1zM617 369h1v1h-1zM623 369h1v1h-1zM629 369h1v1h-1zM635 369h1v1h-1zM641 369h1v1h-1zM647 369h1v1h-1zM653 369h1v1h-1zM659 369h1v1h-1zM665 369h1v1h-1zM671 369h1v1h-1zM677 369h1v1h-1zM683 369h1v1h-1zM689 369h1v1h-1zM695 369h1v1h-1zM701 369h1v1h-1zM707 369h1v1h-1zM713 369h1v1h-1zM719 369h1v1h-1zM725 369h1v1h-1zM731 369h1v1h-1zM737 369h1v1h-1zM743 369h1v1h-1zM749 369h1v1h-1zM755 369h1v1h-1zM761 369h1v1h-1zM767 369h1v1h-1zM773 369h1v1h-1zM779 369h1v1h-1zM785 369h1v1h-1zM791 369h1v1h-1zM797 369h1v1h-1zM803 369h1v1h-1zM809 369h1v1h-1zM815 369h1v1h-1zM821 369h1v1h-1zM827 369h1v1h-1zM833 369h1v1h-1zM839 369h1v1h-1zM845 369h1v1h-1zM851 369h1v1h-1zM857 369h1v1h-1zM863 369h1v1h-1zM869 369h1v1h-1zM875 369h1v1h-1zM881 369h1v1h-1zM887 369h1v1h-1zM893 369h1v1h-1zM899 369h1v1h-1zM905 369h1v1h-1zM911 369h1v1h-1zM917 369h1v1h-1zM923 369h1v1h-1zM929 369h1v1h-1zM935 369h1v1h-1zM941 369h1v1h-1zM947 369h1v1h-1zM953 369h1v1h-1zM959 369h1v1h-1zM965 369h1v1h-1zM971 369h1v1h-1zM977 369h1v1h-1zM983 369h1v1h-1zM365 331h1v1h-1zM371 331h1v1h-1zM377 331h1v1h-1zM383 331h1v1h-1zM389 331h1v1h-1zM395 331h1v1h-1zM401 331h1v1h-1zM407 331h1v1h-1zM413 331h1v1h-1zM419 331h1v1h-1zM425 331h1v1h-1zM431 331h1v1h-1zM437 331h1v1h-1zM443 331h1v1h-1zM449 331h1v1h-1zM455 331h1v1h-1zM461 331h1v1h-1zM467 331h1v1h-1zM473 331h1v1h-1zM479 331h1v1h-1zM485 331h1v1h-1zM491 331h1v1h-1zM497 331h1v1h-1zM503 331h1v1h-1zM509 331h1v1h-1zM515 331h1v1h-1zM521 331h1v1h-1zM527 331h1v1h-1zM533 331h1v1h-1zM539 331h1v1h-1zM545 331h1v1h-1zM551 331h1v1h-1zM557 331h1v1h-1zM563 331h1v1h-1zM569 331h1v1h-1zM575 331h1v1h-1zM581 331h1v1h-1zM587 331h1v1h-1zM593 331h1v1h-1zM599 331h1v1h-1zM605 331h1v1h-1zM611 331h1v1h-1zM617 331h1v1h-1zM623 331h1v1h-1zM629 331h1v1h-1zM635 331h1v1h-1zM641 331h1v1h-1zM647 331h1v1h-1zM653 331h1v1h-1zM659 331h1v1h-1zM665 331h1v1h-1zM671 331h1v1h-1zM677 331h1v1h-1zM683 331h1v1h-1zM689 331h1v1h-1zM695 331h1v1h-1zM701 331h1v1h-1zM707 331h1v1h-1zM713 331h1v1h-1zM719 331h1v1h-1zM725 331h1v1h-1zM731 331h1v1h-1zM737 331h1v1h-1zM743 331h1v1h-1zM749 331h1v1h-1zM755 331h1v1h-1zM761 331h1v1h-1zM767 331h1v1h-1zM773 331h1v1h-1zM779 331h1v1h-1zM785 331h1v1h-1zM791 331h1v1h-1zM797 331h1v1h-1zM803 331h1v1h-1zM809 331h1v1h-1zM815 331h1v1h-1zM821 331h1v1h-1zM827 331h1v1h-1zM833 331h1v1h-1zM839 331h1v1h-1zM845 331h1v1h-1zM851 331h1v1h-1zM857 331h1v1h-1zM863 331h1v1h-1zM869 331h1v1h-1zM875 331h1v1h-1zM881 331h1v1h-1zM887 331h1v1h-1zM893 331h1v1h-1zM899 331h1v1h-1zM905 331h1v1h-1zM911 331h1v1h-1zM917 331h1v1h-1zM923 331h1v1h-1zM929 331h1v1h-1zM935 331h1v1h-1zM941 331h1v1h-1zM947 331h1v1h-1zM953 331h1v1h-1zM959 331h1v1h-1zM965 331h1v1h-1zM971 331h1v1h-1zM977 331h1v1h-1zM983 331h1v1h-1zM365 294h1v1h-1zM371 294h1v1h-1zM377 294h1v1h-1zM383 294h1v1h-1zM389 294h1v1h-1zM395 294h1v1h-1zM401 294h1v1h-1zM407 294h1v1h-1zM413 294h1v1h-1zM419 294h1v1h-1zM425 294h1v1h-1zM431 294h1v1h-1zM437 294h1v1h-1zM443 294h1v1h-1zM449 294h1v1h-1zM455 294h1v1h-1zM461 294h1v1h-1zM467 294h1v1h-1zM473 294h1v1h-1zM479 294h1v1h-1zM485 294h1v1h-1zM491 294h1v1h-1zM497 294h1v1h-1zM503 294h1v1h-1zM509 294h1v1h-1zM515 294h1v1h-1zM521 294h1v1h-1zM527 294h1v1h-1zM533 294h1v1h-1zM539 294h1v1h-1zM545 294h1v1h-1zM551 294h1v1h-1zM557 294h1v1h-1zM563 294h1v1h-1zM569 294h1v1h-1zM575 294h1v1h-1zM581 294h1v1h-1zM587 294h1v1h-1zM593 294h1v1h-1zM599 294h1v1h-1zM605 294h1v1h-1zM611 294h1v1h-1zM617 294h1v1h-1zM623 294h1v1h-1zM629 294h1v1h-1zM635 294h1v1h-1zM641 294h1v1h-1zM647 294h1v1h-1zM653 294h1v1h-1zM659 294h1v1h-1zM665 294h1v1h-1zM671 294h1v1h-1zM677 294h1v1h-1zM683 294h1v1h-1zM689 294h1v1h-1zM695 294h1v1h-1zM701 294h1v1h-1zM707 294h1v1h-1zM713 294h1v1h-1zM719 294h1v1h-1zM725 294h1v1h-1zM731 294h1v1h-1zM737 294h1v1h-1zM743 294h1v1h-1zM749 294h1v1h-1zM755 294h1v1h-1zM761 294h1v1h-1zM767 294h1v1h-1zM773 294h1v1h-1zM779 294h1v1h-1zM785 294h1v1h-1zM791 294h1v1h-1zM797 294h1v1h-1zM803 294h1v1h-1zM809 294h1v1h-1zM815 294h1v1h-1zM821 294h1v1h-1zM827 294h1v1h-1zM833 294h1v1h-1zM839 294h1v1h-1zM845 294h1v1h-1zM851 294h1v1h-1zM857 294h1v1h-1zM863 294h1v1h-1zM869 294h1v1h-1zM875 294h1v1h-1zM881 294h1v1h-1zM887 294h1v1h-1zM893 294h1v1h-1zM899 294h1v1h-1zM905 294h1v1h-1zM911 294h1v1h-1zM917 294h1v1h-1zM923 294h1v1h-1zM929 294h1v1h-1zM935 294h1v1h-1zM941 294h1v1h-1zM947 294h1v1h-1zM953 294h1v1h-1zM959 294h1v1h-1zM965 294h1v1h-1zM971 294h1v1h-1zM977 294h1v1h-1zM983 294h1v1h-1zM365 256h1v1h-1zM371 256h1v1h-1zM377 256h1v1h-1zM383 256h1v1h-1zM389 256h1v1h-1zM395 256h1v1h-1zM401 256h1v1h-1zM407 256h1v1h-1zM413 256h1v1h-1zM419 256h1v1h-1zM425 256h1v1h-1zM431 256h1v1h-1zM437 256h1v1h-1zM443 256h1v1h-1zM449 256h1v1h-1zM455 256h1v1h-1zM461 256h1v1h-1zM467 256h1v1h-1zM473 256h1v1h-1zM479 256h1v1h-1zM485 256h1v1h-1zM491 256h1v1h-1zM497 256h1v1h-1zM503 256h1v1h-1zM509 256h1v1h-1zM515 256h1v1h-1zM521 256h1v1h-1zM527 256h1v1h-1zM533 256h1v1h-1zM539 256h1v1h-1zM545 256h1v1h-1zM551 256h1v1h-1zM557 256h1v1h-1zM563 256h1v1h-1zM569 256h1v1h-1zM575 256h1v1h-1zM581 256h1v1h-1zM587 256h1v1h-1zM593 256h1v1h-1zM599 256h1v1h-1zM605 256h1v1h-1zM611 256h1v1h-1zM617 256h1v1h-1zM623 256h1v1h-1zM629 256h1v1h-1zM635 256h1v1h-1zM641 256h1v1h-1zM647 256h1v1h-1zM653 256h1v1h-1zM659 256h1v1h-1zM665 256h1v1h-1zM671 256h1v1h-1zM677 256h1v1h-1zM683 256h1v1h-1zM689 256h1v1h-1zM695 256h1v1h-1zM701 256h1v1h-1zM707 256h1v1h-1zM713 256h1v1h-1zM719 256h1v1h-1zM725 256h1v1h-1zM731 256h1v1h-1zM737 256h1v1h-1zM743 256h1v1h-1zM749 256h1v1h-1zM755 256h1v1h-1zM761 256h1v1h-1zM767 256h1v1h-1zM773 256h1v1h-1zM779 256h1v1h-1zM785 256h1v1h-1zM791 256h1v1h-1zM797 256h1v1h-1zM803 256h1v1h-1zM809 256h1v1h-1zM815 256h1v1h-1zM821 256h1v1h-1zM827 256h1v1h-1zM833 256h1v1h-1zM839 256h1v1h-1zM845 256h1v1h-1zM851 256h1v1h-1zM857 256h1v1h-1zM863 256h1v1h-1zM869 256h1v1h-1zM875 256h1v1h-1zM881 256h1v1h-1zM887 256h1v1h-1zM893 256h1v1h-1zM899 256h1v1h-1zM905 256h1v1h-1zM911 256h1v1h-1zM917 256h1v1h-1zM923 256h1v1h-1zM929 256h1v1h-1zM935 256h1v1h-1zM941 256h1v1h-1zM947 256h1v1h-1zM953 256h1v1h-1zM959 256h1v1h-1zM965 256h1v1h-1zM971 256h1v1h-1zM977 256h1v1h-1zM983 256h1v1h-1zM459 244h1v1h-1zM459 250h1v1h-1zM459 256h1v1h-1zM459 262h1v1h-1zM459 268h1v1h-1zM459 274h1v1h-1zM459 280h1v1h-1zM459 286h1v1h-1zM459 292h1v1h-1zM459 298h1v1h-1zM459 304h1v1h-1zM459 310h1v1h-1zM459 316h1v1h-1zM459 322h1v1h-1zM459 328h1v1h-1zM459 334h1v1h-1zM459 340h1v1h-1zM459 346h1v1h-1zM459 352h1v1h-1zM459 358h1v1h-1zM459 364h1v1h-1zM459 370h1v1h-1zM459 376h1v1h-1zM459 382h1v1h-1zM459 388h1v1h-1zM459 394h1v1h-1zM459 400h1v1h-1zM459 406h1v1h-1zM459 412h1v1h-1zM459 418h1v1h-1zM459 424h1v1h-1zM459 430h1v1h-1zM459 436h1v1h-1zM459 442h1v1h-1zM459 448h1v1h-1zM459 454h1v1h-1zM459 460h1v1h-1zM459 466h1v1h-1zM459 472h1v1h-1zM459 478h1v1h-1zM459 484h1v1h-1zM459 490h1v1h-1zM459 496h1v1h-1zM459 502h1v1h-1zM459 508h1v1h-1zM459 514h1v1h-1zM459 520h1v1h-1zM459 526h1v1h-1zM459 532h1v1h-1zM459 538h1v1h-1zM459 544h1v1h-1zM459 550h1v1h-1zM564 244h1v1h-1zM564 250h1v1h-1zM564 256h1v1h-1zM564 262h1v1h-1zM564 268h1v1h-1zM564 274h1v1h-1zM564 280h1v1h-1zM564 286h1v1h-1zM564 292h1v1h-1zM564 298h1v1h-1zM564 304h1v1h-1zM564 310h1v1h-1zM564 316h1v1h-1zM564 322h1v1h-1zM564 328h1v1h-1zM564 334h1v1h-1zM564 340h1v1h-1zM564 346h1v1h-1zM564 352h1v1h-1zM564 358h1v1h-1zM564 364h1v1h-1zM564 370h1v1h-1zM564 376h1v1h-1zM564 382h1v1h-1zM564 388h1v1h-1zM564 394h1v1h-1zM564 400h1v1h-1zM564 406h1v1h-1zM564 412h1v1h-1zM564 418h1v1h-1zM564 424h1v1h-1zM564 430h1v1h-1zM564 436h1v1h-1zM564 442h1v1h-1zM564 448h1v1h-1zM564 454h1v1h-1zM564 460h1v1h-1zM564 466h1v1h-1zM564 472h1v1h-1zM564 478h1v1h-1zM564 484h1v1h-1zM564 490h1v1h-1zM564 496h1v1h-1zM564 502h1v1h-1zM564 508h1v1h-1zM564 514h1v1h-1zM564 520h1v1h-1zM564 526h1v1h-1zM564 532h1v1h-1zM564 538h1v1h-1zM564 544h1v1h-1zM564 550h1v1h-1zM669 244h1v1h-1zM669 250h1v1h-1zM669 256h1v1h-1zM669 262h1v1h-1zM669 268h1v1h-1zM669 274h1v1h-1zM669 280h1v1h-1zM669 286h1v1h-1zM669 292h1v1h-1zM669 298h1v1h-1zM669 304h1v1h-1zM669 310h1v1h-1zM669 316h1v1h-1zM669 322h1v1h-1zM669 328h1v1h-1zM669 334h1v1h-1zM669 340h1v1h-1zM669 346h1v1h-1zM669 352h1v1h-1zM669 358h1v1h-1zM669 364h1v1h-1zM669 370h1v1h-1zM669 376h1v1h-1zM669 382h1v1h-1zM669 388h1v1h-1zM669 394h1v1h-1zM669 400h1v1h-1zM669 406h1v1h-1zM669 412h1v1h-1zM669 418h1v1h-1zM669 424h1v1h-1zM669 430h1v1h-1zM669 436h1v1h-1zM669 442h1v1h-1zM669 448h1v1h-1zM669 454h1v1h-1zM669 460h1v1h-1zM669 466h1v1h-1zM669 472h1v1h-1zM669 478h1v1h-1zM669 484h1v1h-1zM669 490h1v1h-1zM669 496h1v1h-1zM669 502h1v1h-1zM669 508h1v1h-1zM669 514h1v1h-1zM669 520h1v1h-1zM669 526h1v1h-1zM669 532h1v1h-1zM669 538h1v1h-1zM669 544h1v1h-1zM669 550h1v1h-1zM774 244h1v1h-1zM774 250h1v1h-1zM774 256h1v1h-1zM774 262h1v1h-1zM774 268h1v1h-1zM774 274h1v1h-1zM774 280h1v1h-1zM774 286h1v1h-1zM774 292h1v1h-1zM774 298h1v1h-1zM774 304h1v1h-1zM774 310h1v1h-1zM774 316h1v1h-1zM774 322h1v1h-1zM774 328h1v1h-1zM774 334h1v1h-1zM774 340h1v1h-1zM774 346h1v1h-1zM774 352h1v1h-1zM774 358h1v1h-1zM774 364h1v1h-1zM774 370h1v1h-1zM774 376h1v1h-1zM774 382h1v1h-1zM774 388h1v1h-1zM774 394h1v1h-1zM774 400h1v1h-1zM774 406h1v1h-1zM774 412h1v1h-1zM774 418h1v1h-1zM774 424h1v1h-1zM774 430h1v1h-1zM774 436h1v1h-1zM774 442h1v1h-1zM774 448h1v1h-1zM774 454h1v1h-1zM774 460h1v1h-1zM774 466h1v1h-1zM774 472h1v1h-1zM774 478h1v1h-1zM774 484h1v1h-1zM774 490h1v1h-1zM774 496h1v1h-1zM774 502h1v1h-1zM774 508h1v1h-1zM774 514h1v1h-1zM774 520h1v1h-1zM774 526h1v1h-1zM774 532h1v1h-1zM774 538h1v1h-1zM774 544h1v1h-1zM774 550h1v1h-1zM879 244h1v1h-1zM879 250h1v1h-1zM879 256h1v1h-1zM879 262h1v1h-1zM879 268h1v1h-1zM879 274h1v1h-1zM879 280h1v1h-1zM879 286h1v1h-1zM879 292h1v1h-1zM879 298h1v1h-1zM879 304h1v1h-1zM879 310h1v1h-1zM879 316h1v1h-1zM879 322h1v1h-1zM879 328h1v1h-1zM879 334h1v1h-1zM879 340h1v1h-1zM879 346h1v1h-1zM879 352h1v1h-1zM879 358h1v1h-1zM879 364h1v1h-1zM879 370h1v1h-1zM879 376h1v1h-1zM879 382h1v1h-1zM879 388h1v1h-1zM879 394h1v1h-1zM879 400h1v1h-1zM879 406h1v1h-1zM879 412h1v1h-1zM879 418h1v1h-1zM879 424h1v1h-1zM879 430h1v1h-1zM879 436h1v1h-1zM879 442h1v1h-1zM879 448h1v1h-1zM879 454h1v1h-1zM879 460h1v1h-1zM879 466h1v1h-1zM879 472h1v1h-1zM879 478h1v1h-1zM879 484h1v1h-1zM879 490h1v1h-1zM879 496h1v1h-1zM879 502h1v1h-1zM879 508h1v1h-1zM879 514h1v1h-1zM879 520h1v1h-1zM879 526h1v1h-1zM879 532h1v1h-1zM879 538h1v1h-1zM879 544h1v1h-1zM879 550h1v1h-1zM984 244h1v1h-1zM984 250h1v1h-1zM984 256h1v1h-1zM984 262h1v1h-1zM984 268h1v1h-1zM984 274h1v1h-1zM984 280h1v1h-1zM984 286h1v1h-1zM984 292h1v1h-1zM984 298h1v1h-1zM984 304h1v1h-1zM984 310h1v1h-1zM984 316h1v1h-1zM984 322h1v1h-1zM984 328h1v1h-1zM984 334h1v1h-1zM984 340h1v1h-1zM984 346h1v1h-1zM984 352h1v1h-1zM984 358h1v1h-1zM984 364h1v1h-1zM984 370h1v1h-1zM984 376h1v1h-1zM984 382h1v1h-1zM984 388h1v1h-1zM984 394h1v1h-1zM984 400h1v1h-1zM984 406h1v1h-1zM984 412h1v1h-1zM984 418h1v1h-1zM984 424h1v1h-1zM984 430h1v1h-1zM984 436h1v1h-1zM984 442h1v1h-1zM984 448h1v1h-1zM984 454h1v1h-1zM984 460h1v1h-1zM984 466h1v1h-1zM984 472h1v1h-1zM984 478h1v1h-1zM984 484h1v1h-1zM984 490h1v1h-1zM984 496h1v1h-1zM984 502h1v1h-1zM984 508h1v1h-1zM984 514h1v1h-1zM984 520h1v1h-1zM984 526h1v1h-1zM984 532h1v1h-1zM984 538h1v1h-1zM984 544h1v1h-1zM984 550h1v1h-1z" fill="#00dede"/><path d="M354 556h5v1h-5zM356 549h3v1h-3zM356 541h3v1h-3zM356 534h3v1h-3zM356 526h3v1h-3zM354 519h5v1h-5zM356 511h3v1h-3zM356 504h3v1h-3zM356 496h3v1h-3zM356 489h3v1h-3zM354 481h5v1h-5zM356 474h3v1h-3zM356 466h3v1h-3zM356 459h3v1h-3zM356 451h3v1h-3zM354 444h5v1h-5zM356 436h3v1h-3zM356 429h3v1h-3zM356 421h3v1h-3zM356 414h3v1h-3zM354 406h5v1h-5zM356 399h3v1h-3zM356 391h3v1h-3zM356 384h3v1h-3zM356 376h3v1h-3zM354 369h5v1h-5zM356 361h3v1h-3zM356 354h3v1h-3zM356 346h3v1h-3zM356 339h3v1h-3zM354 331h5v1h-5zM356 324h3v1h-3zM356 316h3v1h-3zM356 309h3v1h-3zM356 301h3v1h-3zM354 294h5v1h-5zM356 286h3v1h-3zM356 279h3v1h-3zM356 271h3v1h-3zM356 264h3v1h-3zM354 256h5v1h-5zM356 249h3v1h-3zM356 241h3v1h-3zM364 558h1v2h-1zM375 558h1v2h-1zM385 558h1v2h-1zM396 558h1v2h-1zM406 558h1v2h-1zM417 558h1v2h-1zM427 558h1v2h-1zM438 558h1v2h-1zM448 558h1v2h-1zM459 558h1v5h-1zM469 558h1v2h-1zM480 558h1v2h-1zM490 558h1v2h-1zM501 558h1v2h-1zM511 558h1v2h-1zM522 558h1v2h-1zM532 558h1v2h-1zM543 558h1v2h-1zM553 558h1v2h-1zM564 558h1v5h-1zM574 558h1v2h-1zM585 558h1v2h-1zM595 558h1v2h-1zM606 558h1v2h-1zM616 558h1v2h-1zM627 558h1v2h-1zM637 558h1v2h-1zM648 558h1v2h-1zM658 558h1v2h-1zM669 558h1v5h-1zM679 558h1v2h-1zM690 558h1v2h-1zM700 558h1v2h-1zM711 558h1v2h-1zM721 558h1v2h-1zM732 558h1v2h-1zM742 558h1v2h-1zM753 558h1v2h-1zM763 558h1v2h-1zM774 558h1v5h-1zM784 558h1v2h-1zM795 558h1v2h-1zM805 558h1v2h-1zM816 558h1v2h-1zM826 558h1v2h-1zM837 558h1v2h-1zM847 558h1v2h-1zM858 558h1v2h-1zM868 558h1v2h-1zM879 558h1v5h-1zM889 558h1v2h-1zM900 558h1v2h-1zM910 558h1v2h-1zM921 558h1v2h-1zM931 558h1v2h-1zM942 558h1v2h-1zM952 558h1v2h-1zM963 558h1v2h-1zM973 558h1v2h-1zM984 558h1v5h-1zM354 557h6v1h-6z" fill="#000"/><rect x="360" y="402" width="120" height="3" fill="#ff0000"/><rect x="480" y="401" width="115" height="3" fill="#ff0000"/><rect x="595" y="400" width="78" height="3" fill="#ff0000"/><polyline points="359.5,493.5 380.5,493.5 382.5,486.5 391.5,486.5 393.5,479.5 401.5,479.5 403.5,473.5 411.5,473.5 413.5,467.5 422.5,467.5 424.5,461.5 429.5,461.5 430.5,455.5 439.5,455.5 440.5,449.5 448.5,449.5 450.5,443.5 459.5,443.5 461.5,438.5 468.5,438.5 470.5,432.5 479.5,432.5 480.5,426.5 489.5,426.5 491.5,421.5 495.5,421.5 497.5,416.5 506.5,416.5 508.5,412.5 515.5,412.5 516.5,413.5 526.5,413.5 528.5,415.5 536.5,415.5 538.5,412.5 545.5,412.5 547.5,405.5 557.5,405.5 558.5,398.5 562.5,398.5 564.5,391.5 573.5,391.5 575.5,385.5 584.5,385.5 586.5,378.5 593.5,378.5 595.5,372.5 603.5,372.5 605.5,366.5 613.5,366.5 615.5,362.5 624.5,362.5 625.5,363.5 641.5,363.5 642.5,364.5 660.5,364.5 662.5,365.5 673.5,365.5" fill="none" stroke="#0000ff" stroke-width="1" shape-rendering="auto"/></svg>
<div class="t" style="left:130.7px;width:400px;text-align:center;top:513px;font-size:12px;line-height:14px;color:#ff0000;letter-spacing:0px;">2000</div>
<div class="t" style="left:130.7px;width:400px;text-align:center;top:475px;font-size:12px;line-height:14px;color:#ff0000;letter-spacing:0px;">4000</div>
<div class="t" style="left:130.7px;width:400px;text-align:center;top:438px;font-size:12px;line-height:14px;color:#ff0000;letter-spacing:0px;">6000</div>
<div class="t" style="left:130.7px;width:400px;text-align:center;top:400px;font-size:12px;line-height:14px;color:#ff0000;letter-spacing:0px;">8000</div>
<div class="t" style="left:130.7px;width:400px;text-align:center;top:363px;font-size:12px;line-height:14px;color:#ff0000;letter-spacing:0px;">10000</div>
<div class="t" style="left:130.7px;width:400px;text-align:center;top:325px;font-size:12px;line-height:14px;color:#ff0000;letter-spacing:0px;">12000</div>
<div class="t" style="left:130.7px;width:400px;text-align:center;top:288px;font-size:12px;line-height:14px;color:#ff0000;letter-spacing:0px;">14000</div>
<div class="t" style="left:130.7px;width:400px;text-align:center;top:250px;font-size:12px;line-height:14px;color:#ff0000;letter-spacing:0px;">16000</div>
<div class="t" style="left:259.5px;width:400px;text-align:center;top:568px;font-size:12px;line-height:14px;color:#fff;font-weight:bold;letter-spacing:0px;">10</div>
<div class="t" style="left:364.5px;width:400px;text-align:center;top:568px;font-size:12px;line-height:14px;color:#fff;font-weight:bold;letter-spacing:0px;">20</div>
<div class="t" style="left:469.5px;width:400px;text-align:center;top:568px;font-size:12px;line-height:14px;color:#fff;font-weight:bold;letter-spacing:0px;">30</div>
<div class="t" style="left:574.5px;width:400px;text-align:center;top:568px;font-size:12px;line-height:14px;color:#fff;font-weight:bold;letter-spacing:0px;">40</div>
<div class="t" style="left:679.5px;width:400px;text-align:center;top:568px;font-size:12px;line-height:14px;color:#fff;font-weight:bold;letter-spacing:0px;">50</div>
<div class="t" style="left:784.5px;width:400px;text-align:center;top:568px;font-size:12px;line-height:14px;color:#fff;font-weight:bold;letter-spacing:0px;">60</div>
<div class="t" style="left:473.5px;width:400px;text-align:center;top:586px;font-size:12px;line-height:14px;color:#fff;font-weight:bold;letter-spacing:0px;">Time</div>
<div class="t" style="left:290px;top:390px;width:20px;height:20px;font-size:12px;font-weight:bold;color:#ff0000;line-height:14px;"><div style="position:absolute;left:2px;top:1px;transform:rotate(-90deg);transform-origin:50% 50%;">mV</div></div>
</body></html>
